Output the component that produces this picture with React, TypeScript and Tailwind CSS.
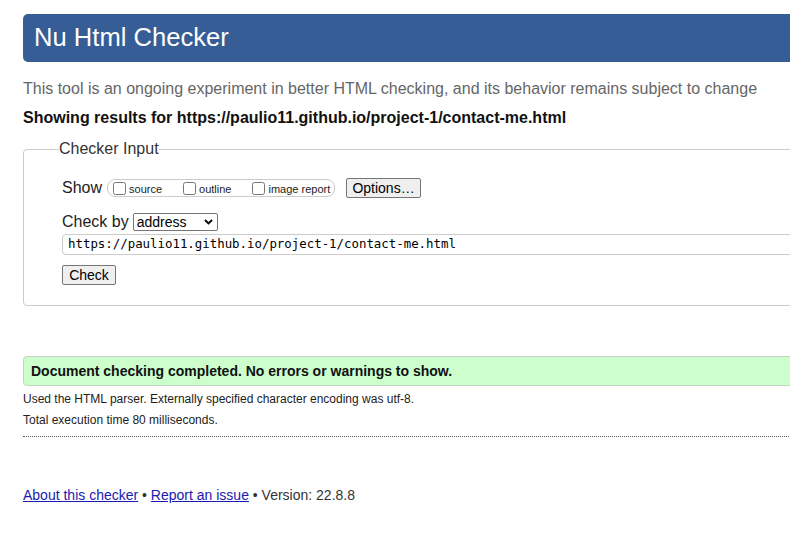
import React from "react";

const sans = "font-['Liberation_Sans',Arial,sans-serif]";

const Box = ({ label }: { label: string }) => (
  <label className="flex items-center">
    <input type="checkbox" className="m-0 h-[13px] w-[13px]" />
    <span className="ml-[3px] mt-[2px] text-[11px] text-[#222]">{label}</span>
  </label>
);

export default function App() {
  return (
    <div className={`h-[537px] w-[790px] overflow-hidden bg-white text-[#222] ${sans}`}>
      <div className="ml-[23px] w-[800px]">
        {/* Header */}
        <div className="mt-[14px] flex h-[48px] items-center rounded-[5px] bg-[#365d95] pl-[11px]">
          <h1 className="text-[25.6px] leading-none text-white">Nu Html Checker</h1>
        </div>

        <p className="mt-[18px] text-[16px] leading-[18px] text-[#666]">
          This tool is an ongoing experiment in better HTML checking, and its behavior remains subject to change
        </p>
        <p className="mt-[11px] text-[16px] font-bold leading-[18px] text-[#111]">
          Showing results for https://paulio11.github.io/project-1/contact-me.html
        </p>

        {/* Checker input */}
        <fieldset className="mt-[13px] rounded-[4px] border border-[#ccc] pb-[18px] pl-[38px]">
          <legend className="-ml-[3px] text-[16px] leading-[18px] text-[#333]">Checker Input</legend>

          <div className="mt-[19px] flex h-[22px] items-center">
            <span className="text-[16px] text-[#222]">Show</span>
            <div className="ml-[5px] flex h-[18px] w-[228px] items-center gap-[21px] rounded-[8px] border border-[#ccc] pl-[5px]">
              <Box label="source" />
              <Box label="outline" />
              <Box label="image report" />
            </div>
            <button className="ml-[11px] h-[20px] w-[75px] rounded-[2px] border border-[#767676] bg-[#efefef] text-[14px] leading-none text-black">
              Options…
            </button>
          </div>

          <div className="mt-[14px] flex h-[18px] items-center">
            <span className="text-[16px] text-[#222]">Check by</span>
            <div className="ml-[4px] flex h-[18px] w-[85px] items-center justify-between rounded-[2px] border border-[#767676] pl-[3px] pr-[4px]">
              <span className="text-[14px] leading-none text-black">address</span>
              <svg width="9" height="6" viewBox="0 0 9 6">
                <path d="M1 1l3.5 3.5L8 1" fill="none" stroke="#000" strokeWidth="1.8" />
              </svg>
            </div>
          </div>

          <div className="mt-[3px] flex h-[21px] items-center rounded-l-[4px] border border-[#ccc] pl-[5px]">
            <span className="font-['DejaVu_Sans_Mono',monospace] text-[12.4px] leading-none text-black">
              https://paulio11.github.io/project-1/contact-me.html
            </span>
          </div>

          <button className="mt-[10px] h-[20px] w-[54px] rounded-[2px] border border-[#767676] bg-[#efefef] text-[14px] leading-none text-black">
            Check
          </button>
        </fieldset>

        {/* Result */}
        <div className="mt-[50px] flex h-[30px] items-center rounded-[4px] border border-[#c4d4c4] bg-[#ccffcc] pl-[7px]">
          <span className="text-[14px] font-bold text-[#111]">
            Document checking completed. No errors or warnings to show.
          </span>
        </div>
        <p className="mt-[6px] text-[12px] leading-[14px] text-[#222]">
          Used the HTML parser. Externally specified character encoding was utf-8.
        </p>
        <p className="mt-[7px] text-[12px] leading-[14px] text-[#222]">Total execution time 80 milliseconds.</p>
        <div className="mt-[9px] border-t border-dotted border-[#555]" />

        {/* Footer */}
        <p className="mt-[50px] text-[14px] leading-[16px] text-[#333]">
          <a href="#" className="text-[#1a1ab0] underline">About this checker</a>
          {" • "}
          <a href="#" className="text-[#1a1ab0] underline">Report an issue</a>
          {" • Version: 22.8.8"}
        </p>
      </div>
    </div>
  );
}
